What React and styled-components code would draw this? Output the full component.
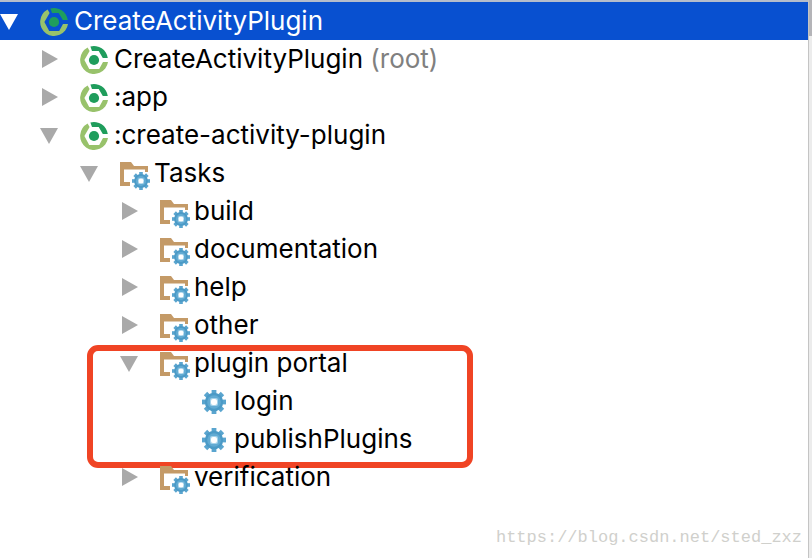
import React, { useState } from "react";
import styled, { createGlobalStyle } from "styled-components";

const project = {
	name: "CreateActivityPlugin",
	icon: "gradle",
	children: [
		{ name: "CreateActivityPlugin", note: "(root)", icon: "gradle", closed: true, children: [] },
		{ name: ":app", icon: "gradle", closed: true, children: [] },
		{
			name: ":create-activity-plugin",
			icon: "gradle",
			children: [
				{
					name: "Tasks",
					icon: "folder",
					children: [
						{ name: "build", icon: "folder", closed: true, children: [] },
						{ name: "documentation", icon: "folder", closed: true, children: [] },
						{ name: "help", icon: "folder", closed: true, children: [] },
						{ name: "other", icon: "folder", closed: true, children: [] },
						{
							name: "plugin portal",
							icon: "folder",
							marked: true,
							children: [
								{ name: "login", icon: "task" },
								{ name: "publishPlugins", icon: "task" },
							],
						},
						{ name: "verification", icon: "folder", closed: true, children: [] },
					],
				},
			],
		},
	],
};

const GearShape = () => (
	<>
		<g fill="#5aa5cf">
			{[0, 45, 90, 135].map((angle) => (
				<rect key={angle} x="9.6" y="0" width="4.8" height="24" transform={`rotate(${angle} 12 12)`} />
			))}
			<circle cx="12" cy="12" r="9.2" fill="#4b9ac6" />
			<circle cx="12" cy="12" r="6.8" fill="#62abd3" />
		</g>
		<rect x="8" y="8" width="8" height="8" rx="2" fill="#a5d2ea" />
		<rect x="9" y="9" width="6" height="6" rx="2" fill="#fff" />
	</>
);

const NodeIcon = ({ type }) => (
	<IconSvg viewBox="0 0 30 32" aria-hidden="true">
		{type === "gradle" && (
			<g transform="translate(0 2)">
				<path
					fill="#98c26b"
					d="M7.6 1.6A14 14 0 1 0 28 16H23L19.2 23H9.2L4.4 14L9.6 5Z"
				/>
				<path fill="#1f9d5c" d="M10.4 .5A14 14 0 0 1 27.8 12H22.8L18.7 5H12Z" />
				<circle cx="14" cy="14" r="5.1" fill="#1f9d5c" />
			</g>
		)}
		{type === "folder" && (
			<>
				<path fill="#c49a67" d="M0 4h11l3 4h14v6h-3v-2.500H4V24h6v4H0z" />
				<g transform="translate(12 14) scale(0.75)">
					<GearShape />
				</g>
			</>
		)}
		{type === "task" && (
			<g transform="translate(2 4)">
				<GearShape />
			</g>
		)}
	</IconSvg>
);

const TreeNode = ({ node, selected }) => {
	const [open, setOpen] = useState(!node.closed);

	return (
		<Item role="treeitem" aria-expanded={node.children ? open : undefined}>
			<Row $selected={selected}>
				{node.children ? (
					<Toggle
						type="button"
						aria-label={`Toggle ${node.name}`}
						$selected={selected}
						onClick={() => setOpen(!open)}
					>
						<svg width="18" height="18" viewBox="0 0 18 18" aria-hidden="true">
							<path d={open ? "M0 2H18L9 18Z" : "M2 0L18 9L2 18Z"} fill="currentColor" />
						</svg>
					</Toggle>
				) : (
					<Spacer />
				)}
				<NodeIcon type={node.icon} />
				<Label>
					{node.name}
					{node.note && <Note> {node.note}</Note>}
				</Label>
			</Row>
			{open && node.children && node.children.length > 0 && (
				<Group role="group">
					{node.children.map((child) => (
						<TreeNode key={child.name} node={child} />
					))}
				</Group>
			)}
			{node.marked && <Marker />}
		</Item>
	);
};

const App = () => (
	<>
		<GlobalStyle />
		<Panel>
			<Content>
				<Tree role="tree" aria-label="Gradle projects">
					<TreeNode node={project} selected />
				</Tree>
				<Watermark>https://blog.csdn.net/sted_zxz</Watermark>
			</Content>
			<ScrollTrack>
				<ScrollThumb />
			</ScrollTrack>
		</Panel>
	</>
);

const GlobalStyle = createGlobalStyle`
	* {
		box-sizing: border-box;
	}
	body {
		margin: 0;
		background: #fff;
		color: #000;
		font-family: Inter, sans-serif;
		font-size: 26px;
	}
`;

const Panel = styled.div`
	display: flex;
	min-height: 100vh;
`;

const Content = styled.main`
	flex: 1;
	display: flex;
	flex-direction: column;
	justify-content: space-between;
	border-top: 2px solid #b5bdcb;
`;

const Tree = styled.ul`
	margin: 0;
	padding: 0;
	list-style: none;
`;

const Group = styled.ul`
	margin: 0;
	padding: 0 0 0 40px;
	list-style: none;
`;

const Item = styled.li`
	position: relative;
`;

const Row = styled.div`
	display: flex;
	align-items: center;
	height: 38px;
	color: ${(p) => (p.$selected ? "#fff" : "#000")};
	background: ${(p) => (p.$selected ? "#0850d0" : "transparent")};
`;

const Toggle = styled.button`
	display: flex;
	width: 18px;
	margin-right: 22px;
	padding: 0;
	border: 0;
	background: none;
	color: ${(p) => (p.$selected ? "#fff" : "#a9a9a9")};
	cursor: pointer;
`;

const Spacer = styled.span`
	width: 18px;
	margin-right: 22px;
`;

const IconSvg = styled.svg`
	flex: none;
	width: 30px;
	height: 32px;
	margin: 2px 4px 0 0;
`;

const Label = styled.span`
	line-height: 38px;
	white-space: nowrap;
`;

const Note = styled.span`
	color: #808080;
`;

/* drawn over the rows it frames */
const Marker = styled.div`
	position: absolute;
	top: 1px;
	left: -33px;
	width: 386px;
	height: 123px;
	border: 6px solid #f04424;
	border-radius: 11px;
	pointer-events: none;
`;

const Watermark = styled.p`
	margin: 0;
	padding: 0 6px 8px;
	color: #d0d0cc;
	font-family: "Liberation Mono", monospace;
	font-size: 17px;
	line-height: 24px;
	text-align: right;
`;

const ScrollTrack = styled.div`
	width: 4px;
	border-left: 1px solid #c4c4c4;
	background: #ececec;
`;

const ScrollThumb = styled.div`
	height: 36px;
	background: #b4b4b8;
`;

export default App;
